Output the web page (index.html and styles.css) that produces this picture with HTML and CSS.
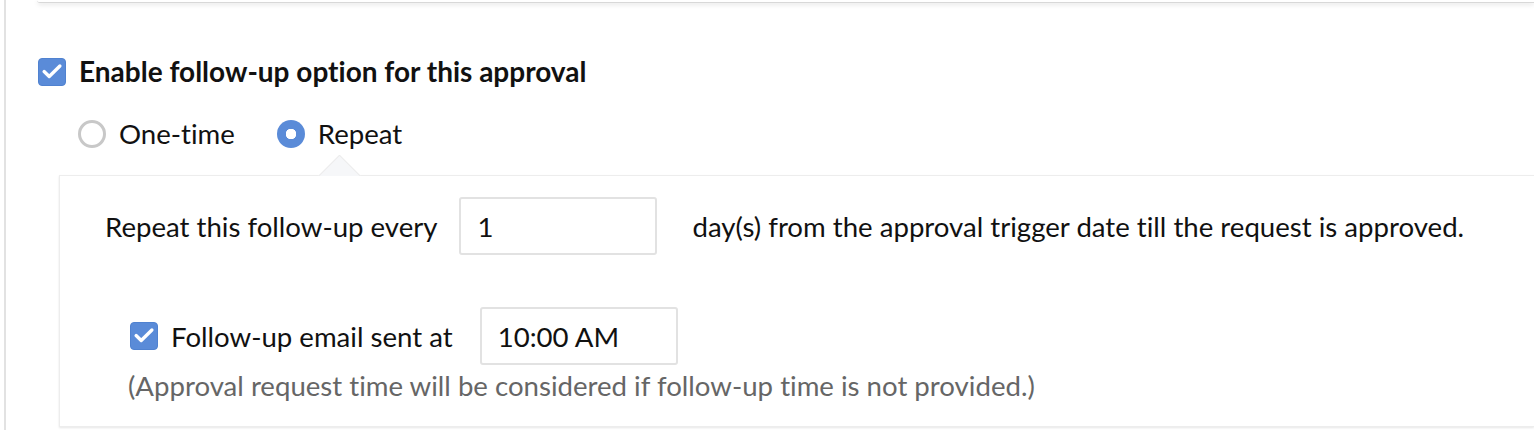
FILE: index.html
```html
<!DOCTYPE html>
<html>
<head>
<meta charset="utf-8">
<link rel="stylesheet" href="styles.css">
</head>
<body>
<div class="page">
  <div class="top-card"></div>
  <section class="followup">
    <label class="enable-row">
      <span class="check">
        <svg viewBox="0 0 28 28" width="28" height="28"><path d="M5.5 13.5 L11 18.8 L22.5 7.5" fill="none" stroke="#fff" stroke-width="3.6" stroke-linecap="round" stroke-linejoin="round"/></svg>
      </span>
      <span class="enable-text">Enable follow-up option for this approval</span>
    </label>
    <div class="radio-row">
      <label class="radio-opt"><span class="radio"></span><span>One-time</span></label>
      <label class="radio-opt"><span class="radio on"></span><span>Repeat</span></label>
    </div>
    <div class="panel">
      <div class="arrow"><span></span></div>
      <div class="row first">
        <span>Repeat this follow-up every</span>
        <span class="field">1</span>
        <span class="after">day(s) from the approval trigger date till the request is approved.</span>
      </div>
      <div class="row second">
        <span class="check">
          <svg viewBox="0 0 28 28" width="28" height="28"><path d="M5.5 13.5 L11 18.8 L22.5 7.5" fill="none" stroke="#fff" stroke-width="3.6" stroke-linecap="round" stroke-linejoin="round"/></svg>
        </span>
        <span class="label">Follow-up email sent at</span>
        <span class="field time">10:00 AM</span>
      </div>
      <p class="note">(Approval request time will be considered if follow-up time is not provided.)</p>
    </div>
  </section>
</div>
</body>
</html>
```

FILE: styles.css
```css
html, body {
  margin: 0;
  padding: 0;
  background: #fff;
  overflow: hidden;
}
body {
  font-family: Lato, "Open Sans", sans-serif;
  font-size: 27.6px;
  font-variant-ligatures: none;
  color: #111;
}
.page {
  margin-left: 4px;
  border-left: 2px solid #e2e2e2;
  height: 430px;
}
.top-card {
  margin-left: 31px;
  height: 2px;
  border-bottom: 1px solid #d8d8d8;
  border-bottom-left-radius: 4px;
  box-shadow: 0 2px 4px rgba(0,0,0,0.10);
}
.followup {
  padding-top: 54px;
}
.enable-row {
  display: flex;
  align-items: center;
  gap: 13px;
  margin-left: 32px;
  height: 29px;
}
.check {
  width: 28px;
  height: 28px;
  flex: none;
  background: #5a8bd8;
  border: 1px solid #5082d0;
  border-radius: 4px;
  box-sizing: border-box;
  display: flex;
  align-items: center;
  justify-content: center;
}
.check svg { display: block; }
.enable-text {
  font-weight: 700;
  font-size: 28px;
  line-height: 29px;
}
.radio-row {
  display: flex;
  align-items: center;
  gap: 42px;
  margin-left: 72px;
  margin-top: 33px;
  height: 29px;
}
.radio-opt {
  display: flex;
  align-items: center;
  gap: 13px;
  line-height: 29px;
}
.radio {
  width: 28px;
  height: 28px;
  border-radius: 50%;
  border: 3px solid #c8c8c8;
  box-sizing: border-box;
  flex: none;
}
.radio.on {
  border: none;
  background: radial-gradient(circle, #fff 0 5px, #5a8bd8 5.5px);
}
.panel {
  position: relative;
  margin-left: 53px;
  margin-top: 27px;
  border: 1px solid #ededed;
  border-right: none;
  box-shadow: 0 1px 2px rgba(0,0,0,0.10);
  padding: 21px 0 24px 45px;
  height: 252px;
  box-sizing: border-box;
}
.arrow {
  position: absolute;
  left: 257px;
  top: -21px;
  width: 44px;
  height: 21px;
  overflow: hidden;
}
.arrow span {
  position: absolute;
  left: 7px;
  top: 6px;
  width: 29px;
  height: 29px;
  background: #f6f7f9;
  border: 1px solid #ececec;
  transform: rotate(45deg);
}
.row {
  display: flex;
  align-items: center;
  height: 58px;
}
.row.first span:first-child { margin-right: 21px; }
.field {
  width: 198px;
  height: 58px;
  box-sizing: border-box;
  border: 2px solid #e2e2e2;
  border-radius: 3px;
  padding-left: 17px;
  display: flex;
  align-items: center;
  flex: none;
}
.after { margin-left: 36px; }
.row.second {
  margin-top: 52px;
  margin-left: 25px;
}
.row.second .label {
  margin-left: 13px;
  margin-right: 27px;
}
.field.time { padding-left: 16px; }
.note {
  margin: 4px 0 0 23px;
  line-height: 34px;
  color: #666;
}
```
